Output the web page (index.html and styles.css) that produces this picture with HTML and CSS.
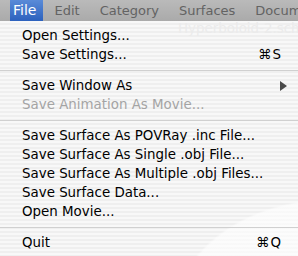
FILE: index.html
```html
<!DOCTYPE html>
<html lang="en">
<head>
  <meta charset="UTF-8">
  <title>File menu</title>
  <link rel="stylesheet" href="styles.css">
</head>
<body>
  <div class="menubar">
    <span class="bar-item active">File</span>
    <span class="bar-item">Edit</span>
    <span class="bar-item">Category</span>
    <span class="bar-item">Surfaces</span>
    <span class="bar-item">Docum</span>
  </div>
  <div class="menu">
    <span class="ghost-title">Hyperboloid-2.sche</span>
    <div class="menu-row"><span>Open Settings...</span></div>
    <div class="menu-row"><span>Save Settings...</span><span class="key">&#8984;S</span></div>
    <div class="menu-sep"></div>
    <div class="menu-row"><span>Save Window As</span><span class="arrow"></span></div>
    <div class="menu-row disabled"><span>Save Animation As Movie...</span></div>
    <div class="menu-sep"></div>
    <div class="menu-row"><span>Save Surface As POVRay .inc File...</span></div>
    <div class="menu-row"><span>Save Surface As Single .obj File...</span></div>
    <div class="menu-row"><span>Save Surface As Multiple .obj Files...</span></div>
    <div class="menu-row"><span>Save Surface Data...</span></div>
    <div class="menu-row"><span>Open Movie...</span></div>
    <div class="menu-sep"></div>
    <div class="menu-row"><span>Quit</span><span class="key">&#8984;Q</span></div>
  </div>
</body>
</html>
```

FILE: styles.css
```css
* {
  box-sizing: border-box;
}
body {
  margin: 0;
  width: 298px;
  height: 256px;
  overflow: hidden;
  font-family: 'DejaVu Sans', 'Liberation Sans', sans-serif;
  font-size: 13.4px;
  background: #f4f4f4;
}

/* 상단 메뉴바 */
.menubar {
  height: 21px;
  display: flex;
  align-items: center;
  padding-left: 10px;
  background: linear-gradient(#bababa, #aaaaaa);
  color: #636363;
  white-space: nowrap;
  overflow: hidden;
  font-size: 13px;
}

.bar-item {
  height: 21px;
  line-height: 21px;
  margin-right: 20px;
}

.bar-item.active {
  background: linear-gradient(#5a8bd8, #2c61bd);
  color: #ffffff;
  font-size: 14px;
  padding: 0 7px 0 3px;
  margin-right: 11px;
}

/* 드롭다운 메뉴 */
.menu {
  position: relative;
  padding-top: 5px;
  height: 235px;
  background:
    radial-gradient(ellipse 260px 200px at 330px 300px, rgba(255, 255, 255, 0.6) 0%, rgba(255, 255, 255, 0.6) 60%, transparent 61%),
    repeating-linear-gradient(#f8f8f8 0, #f8f8f8 2px, #efefef 2px, #efefef 4px);
  color: #000000;
}

.ghost-title {
  position: absolute;
  top: 0;
  left: 178px;
  color: #ebebeb;
  white-space: nowrap;
}

.menu-row {
  position: relative;
  height: 19px;
  line-height: 19px;
  display: flex;
  justify-content: space-between;
  align-items: center;
  padding: 0 16px 0 22px;
  white-space: nowrap;
}

.menu-row.disabled {
  color: #a4a4a4;
}

.key {
  letter-spacing: 1px;
}

.arrow {
  width: 0;
  height: 0;
  border-top: 5px solid transparent;
  border-bottom: 5px solid transparent;
  border-left: 7px solid #4a4a4a;
  margin-right: -5px;
}

.menu-sep {
  height: 12px;
  display: flex;
  align-items: center;
}

.menu-sep::after {
  content: '';
  display: block;
  width: 100%;
  height: 1px;
  background: #d0d0d0;
}
```
